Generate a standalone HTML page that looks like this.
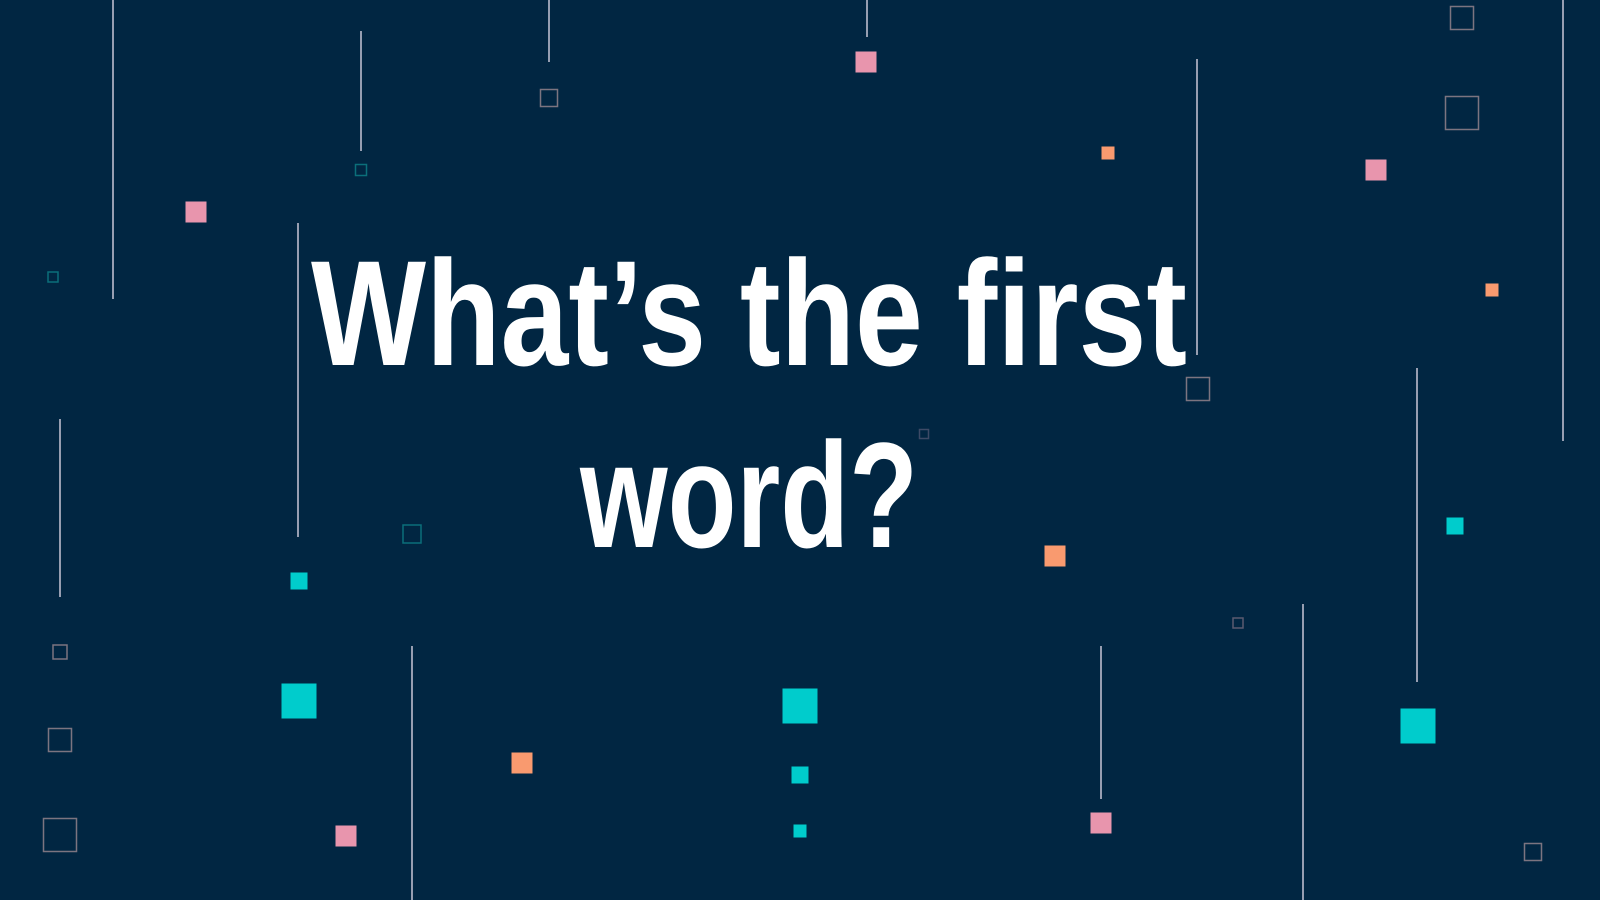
<!DOCTYPE html>
<html><head><meta charset="utf-8"><style>
html,body{margin:0;padding:0;background:#012642;width:1600px;height:900px;overflow:hidden}
svg{display:block}
</style></head><body>
<svg width="1600" height="900" viewBox="0 0 1600 900" xmlns="http://www.w3.org/2000/svg">
<rect width="1600" height="900" fill="#012642"/>
<g stroke="#c9c6d6" stroke-width="1.5">
<line x1="113" y1="0" x2="113" y2="299"/>
<line x1="361" y1="31" x2="361" y2="151"/>
<line x1="549" y1="0" x2="549" y2="62"/>
<line x1="867" y1="0" x2="867" y2="37"/>
<line x1="1197" y1="59" x2="1197" y2="355"/>
<line x1="1563" y1="0" x2="1563" y2="441"/>
<line x1="60" y1="419" x2="60" y2="597"/>
<line x1="298" y1="223" x2="298" y2="537"/>
<line x1="412" y1="646" x2="412" y2="900"/>
<line x1="1101" y1="646" x2="1101" y2="799"/>
<line x1="1303" y1="604" x2="1303" y2="900"/>
<line x1="1417" y1="368" x2="1417" y2="682"/>
</g>
<g>
<rect x="855.5" y="51.5" width="21" height="21" fill="#e895ad"/>
<rect x="1101.5" y="146.5" width="13" height="13" fill="#f99a6f"/>
<rect x="185.5" y="201.5" width="21" height="21" fill="#e895ad"/>
<rect x="1365.5" y="159.5" width="21" height="21" fill="#e895ad"/>
<rect x="1485.5" y="283.5" width="13" height="13" fill="#f99a6f"/>
<rect x="1446.5" y="517.5" width="17" height="17" fill="#00cccc"/>
<rect x="1044.5" y="545.5" width="21" height="21" fill="#f99a6f"/>
<rect x="290.5" y="572.5" width="17" height="17" fill="#00cccc"/>
<rect x="281.5" y="683.5" width="35" height="35" fill="#00cccc"/>
<rect x="782.5" y="688.5" width="35" height="35" fill="#00cccc"/>
<rect x="1400.5" y="708.5" width="35" height="35" fill="#00cccc"/>
<rect x="511.5" y="752.5" width="21" height="21" fill="#f99a6f"/>
<rect x="791.5" y="766.5" width="17" height="17" fill="#00cccc"/>
<rect x="793.5" y="824.5" width="13" height="13" fill="#00cccc"/>
<rect x="1090.5" y="812.5" width="21" height="21" fill="#e895ad"/>
<rect x="335.5" y="825.5" width="21" height="21" fill="#e895ad"/>
</g>
<g fill="none" stroke="#7c7480" stroke-width="1.5">
<rect x="1450.5" y="6.5" width="23" height="23"/>
<rect x="1445.5" y="96.5" width="33" height="33"/>
<rect x="540.5" y="89.5" width="17" height="17"/>
<rect x="1186.5" y="377.5" width="23" height="23"/>
<rect x="919.5" y="429.5" width="9" height="9" stroke="#3d4a66"/>
<rect x="1233" y="618" width="10" height="10" stroke="#5a5a70"/>
<rect x="53" y="645" width="14" height="14"/>
<rect x="48.5" y="728.5" width="23" height="23"/>
<rect x="43.5" y="818.5" width="33" height="33"/>
<rect x="1524.5" y="843.5" width="17" height="17"/>
</g>
<g fill="none" stroke="#0b6f7a" stroke-width="1.5">
<rect x="355.5" y="164.5" width="11" height="11"/>
<rect x="48" y="272" width="10" height="10"/>
<rect x="403" y="525" width="18" height="18"/>
</g>
<g fill="#ffffff" font-family="'Liberation Sans Narrow','Liberation Sans',sans-serif" font-size="150" font-weight="bold">
<text x="311" y="365" textLength="876" lengthAdjust="spacingAndGlyphs">What’s the first</text>
<text x="580" y="547" textLength="338" lengthAdjust="spacingAndGlyphs">word?</text>
</g>
</svg>
</body></html>
